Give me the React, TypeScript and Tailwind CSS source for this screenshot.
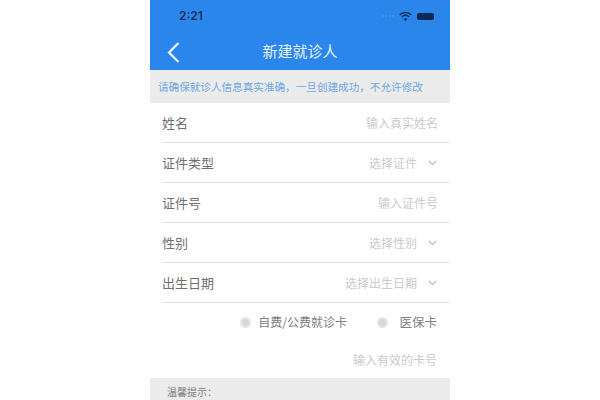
const cjk = { fontFamily: '"Noto Sans CJK SC", "Liberation Sans", sans-serif' };

const Chevron = () => (
    <svg width="9" height="6" viewBox="0 0 9 6" fill="none" stroke="#b5b5b5" strokeWidth="1.1" className="ml-[11px] mr-px">
        <path d="M0.8 1 L4.5 4.6 L8.2 1" />
    </svg>
);

const Row = ({ label, value, select }: { label: string; value: string; select?: boolean }) => (
    <div className="h-10 shrink-0 ml-3 pr-3 border-b border-[#e2e2e2] flex items-center justify-between">
        <span className="text-[13px] text-[#707070]">{label}</span>
        <div className="flex items-center">
            <span className="text-[12px] text-[#cacaca]">{value}</span>
            {select && <Chevron />}
        </div>
    </div>
);

const Radio = () => (
    <span className="block shrink-0 w-[11px] h-[11px] rounded-full bg-[#d8d8d8] border-2 border-[#e6e6e6]" />
);

const Dot = () => <span className="block w-[2px] h-[2px] rounded-full bg-[#5f8fc9]" />;

export default function App() {
    return (
        <div className="w-[600px] h-[400px] bg-white overflow-hidden flex justify-center" style={cjk}>
            <div className="w-[300px] h-[400px] overflow-hidden flex flex-col">
                <div className="h-[70px] shrink-0 bg-[#2a86ea] flex flex-col">
                    <div className="h-[32px] pl-[29px] pr-[16px] flex items-center justify-between">
                        <span className="text-[12px] font-semibold text-[#10305f]" style={{ fontFamily: '"Inter", sans-serif' }}>2:21</span>
                        <div className="flex items-center gap-[4px]">
                            <div className="flex items-center gap-[1.5px] mr-[1px]">
                                <Dot />
                                <Dot />
                                <Dot />
                                <Dot />
                            </div>
                            <svg width="13" height="9" viewBox="0 0 13 9" fill="none" stroke="#0d2a55" strokeWidth="1.4">
                                <path d="M0.7 3 C4 -0.2 9 -0.2 12.3 3" />
                                <path d="M2.8 5 C5 3 8 3 10.2 5" />
                                <path d="M6.5 9 L4.6 6.9 C5.7 6 7.3 6 8.4 6.9 Z" fill="#0d2a55" stroke="none" />
                            </svg>
                            <span className="ml-[1px] w-[17px] h-[7px] rounded-[2px] bg-[#0d2a55]" />
                        </div>
                    </div>
                    <div className="flex-1 relative flex items-center justify-center">
                        <svg width="13" height="21" viewBox="0 0 13 21" fill="none" stroke="#eef5fd" strokeWidth="2.2" className="absolute left-[17px] top-[10px]">
                            <path d="M11.5 1 L2 10.5 L11.5 20" />
                        </svg>
                        <span className="text-[15px] text-[#e6f0fb]">新建就诊人</span>
                    </div>
                </div>
                <div className="h-[33px] shrink-0 bg-[#ebebeb] pl-2 flex items-center text-[10.6px] text-[#6aa9e4]">
                    请确保就诊人信息真实准确，一旦创建成功，不允许修改
                </div>
                <Row label="姓名" value="输入真实姓名" />
                <Row label="证件类型" value="选择证件" select />
                <Row label="证件号" value="输入证件号" />
                <Row label="性别" value="选择性别" select />
                <Row label="出生日期" value="选择出生日期" select />
                <div className="h-10 shrink-0 pr-[13px] pb-[2px] flex items-center justify-end">
                    <Radio />
                    <span className="ml-[7px] text-[12px] text-[#808080]">自费/公费就诊卡</span>
                    <span className="ml-[30px]"><Radio /></span>
                    <span className="ml-[11.5px] text-[12.5px] text-[#808080]">医保卡</span>
                </div>
                <div className="h-[35px] shrink-0 pr-[13px] pb-[2px] flex items-center justify-end text-[12px] text-[#cacaca]">
                    输入有效的卡号
                </div>
                <div className="flex-1 bg-[#ebebeb] pl-[17px] pt-[9px] text-[10px] leading-[10px] text-[#808080]">温馨提示：</div>
            </div>
        </div>
    );
}
